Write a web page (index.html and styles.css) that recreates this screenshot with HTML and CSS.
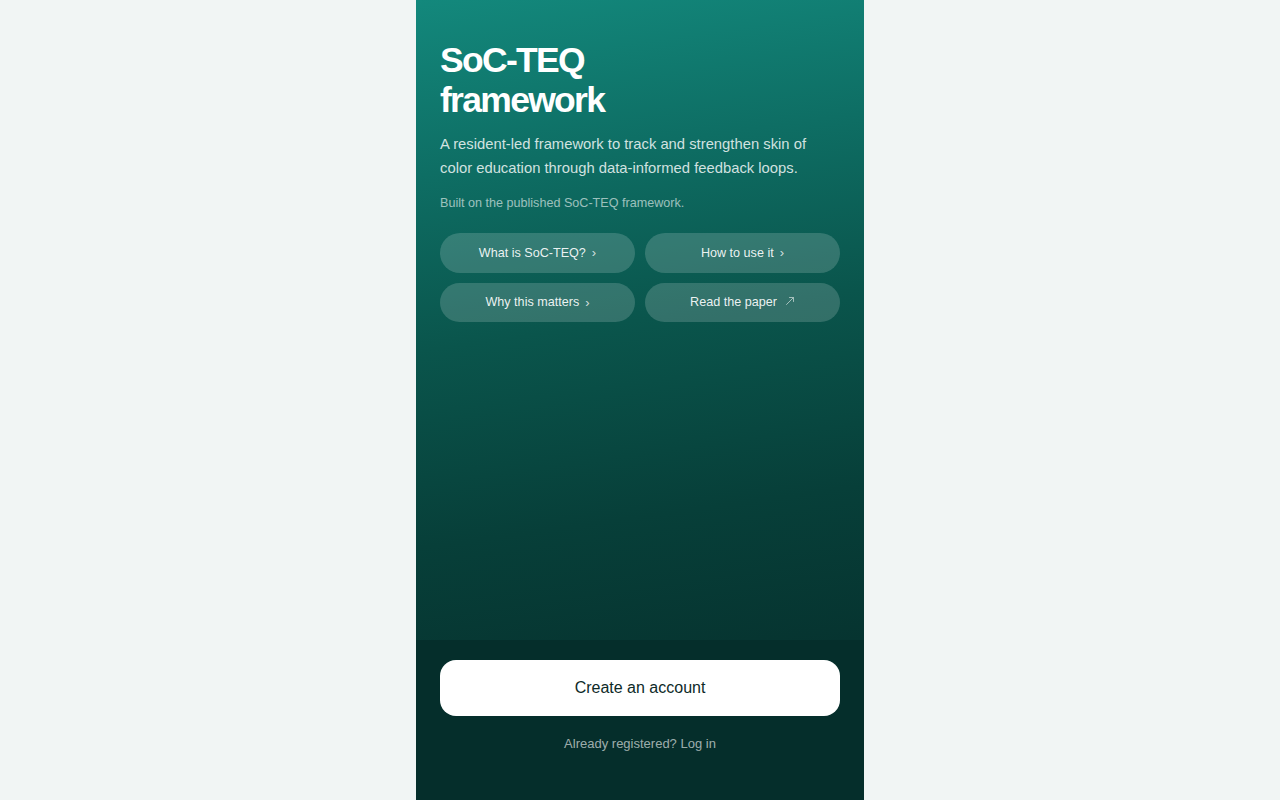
FILE: index.html
```html
<!DOCTYPE html>
<html lang="en">
<head>
<meta charset="utf-8">
<title>SoC-TEQ framework</title>
<link rel="stylesheet" href="styles.css">
</head>
<body>
<main class="panel">
  <section class="hero">
    <h1 class="title">SoC-TEQ<br>framework</h1>
    <p class="lead">A resident-led framework to track and strengthen skin of color education through data-informed feedback loops.</p>
    <p class="note">Built on the published SoC-TEQ framework.</p>
    <nav class="links">
      <a class="pill" href="#">What is SoC-TEQ? <span class="chev">›</span></a>
      <a class="pill" href="#">How to use it <span class="chev">›</span></a>
      <a class="pill" href="#">Why this matters <span class="chev">›</span></a>
      <a class="pill" href="#">Read the paper <svg class="ext" width="10" height="10" viewBox="0 0 10 10"><path d="M1.5 8.5 L8.5 1.5 M4.5 1.5 H8.5 V5.5" fill="none" stroke="currentColor" stroke-width="1" stroke-linecap="round"/></svg></a>
    </nav>
  </section>
  <section class="footer">
    <a class="cta" href="#">Create an account</a>
    <a class="login" href="#">Already registered? Log in</a>
  </section>
</main>
</body>
</html>
```

FILE: styles.css
```css
* { box-sizing: border-box; }
html, body { margin: 0; height: 100%; }
body {
  background: #f1f5f4;
  font-family: "Liberation Sans", Arial, sans-serif;
  display: flex;
  justify-content: center;
}
a { text-decoration: none; }
.panel {
  width: 448px;
  height: 800px;
  display: flex;
  flex-direction: column;
}
.hero {
  flex: 1;
  padding: 40px 24px 0;
  background: linear-gradient(172deg, #13887c 0%, #0e6e64 25%, #0a554c 50%, #073f39 78%, #063430 100%);
}
.title {
  margin: 0;
  color: #ffffff;
  font-size: 35.5px;
  line-height: 40px;
  font-weight: 700;
  letter-spacing: -1.7px;
}
.lead {
  margin: 12px 0 0;
  color: rgba(255,255,255,0.82);
  font-size: 14.8px;
  line-height: 24px;
}
.note {
  margin: 13px 0 0;
  color: rgba(255,255,255,0.6);
  font-size: 12.6px;
  line-height: 20px;
}
.links {
  margin-top: 20px;
  display: grid;
  grid-template-columns: 1fr 1fr;
  gap: 10px;
}
.pill {
  height: 39.5px;
  border-radius: 20px;
  background: rgba(255,255,255,0.17);
  color: rgba(255,255,255,0.92);
  font-size: 12.6px;
  display: flex;
  align-items: center;
  justify-content: center;
  gap: 6px;
}
.chev { font-size: 13px; opacity: 0.85; }
.ext { opacity: 0.6; margin-left: 2px; margin-top: -3px; }
.footer {
  height: 160px;
  background: #052e2b;
  padding: 20px 24px 0;
  display: flex;
  flex-direction: column;
  align-items: center;
}
.cta {
  width: 100%;
  height: 56px;
  border-radius: 16px;
  background: #ffffff;
  color: #0d2a28;
  font-size: 16px;
  display: flex;
  align-items: center;
  justify-content: center;
}
.login {
  margin-top: 18px;
  color: rgba(255,255,255,0.62);
  font-size: 13px;
  line-height: 20px;
}
```
